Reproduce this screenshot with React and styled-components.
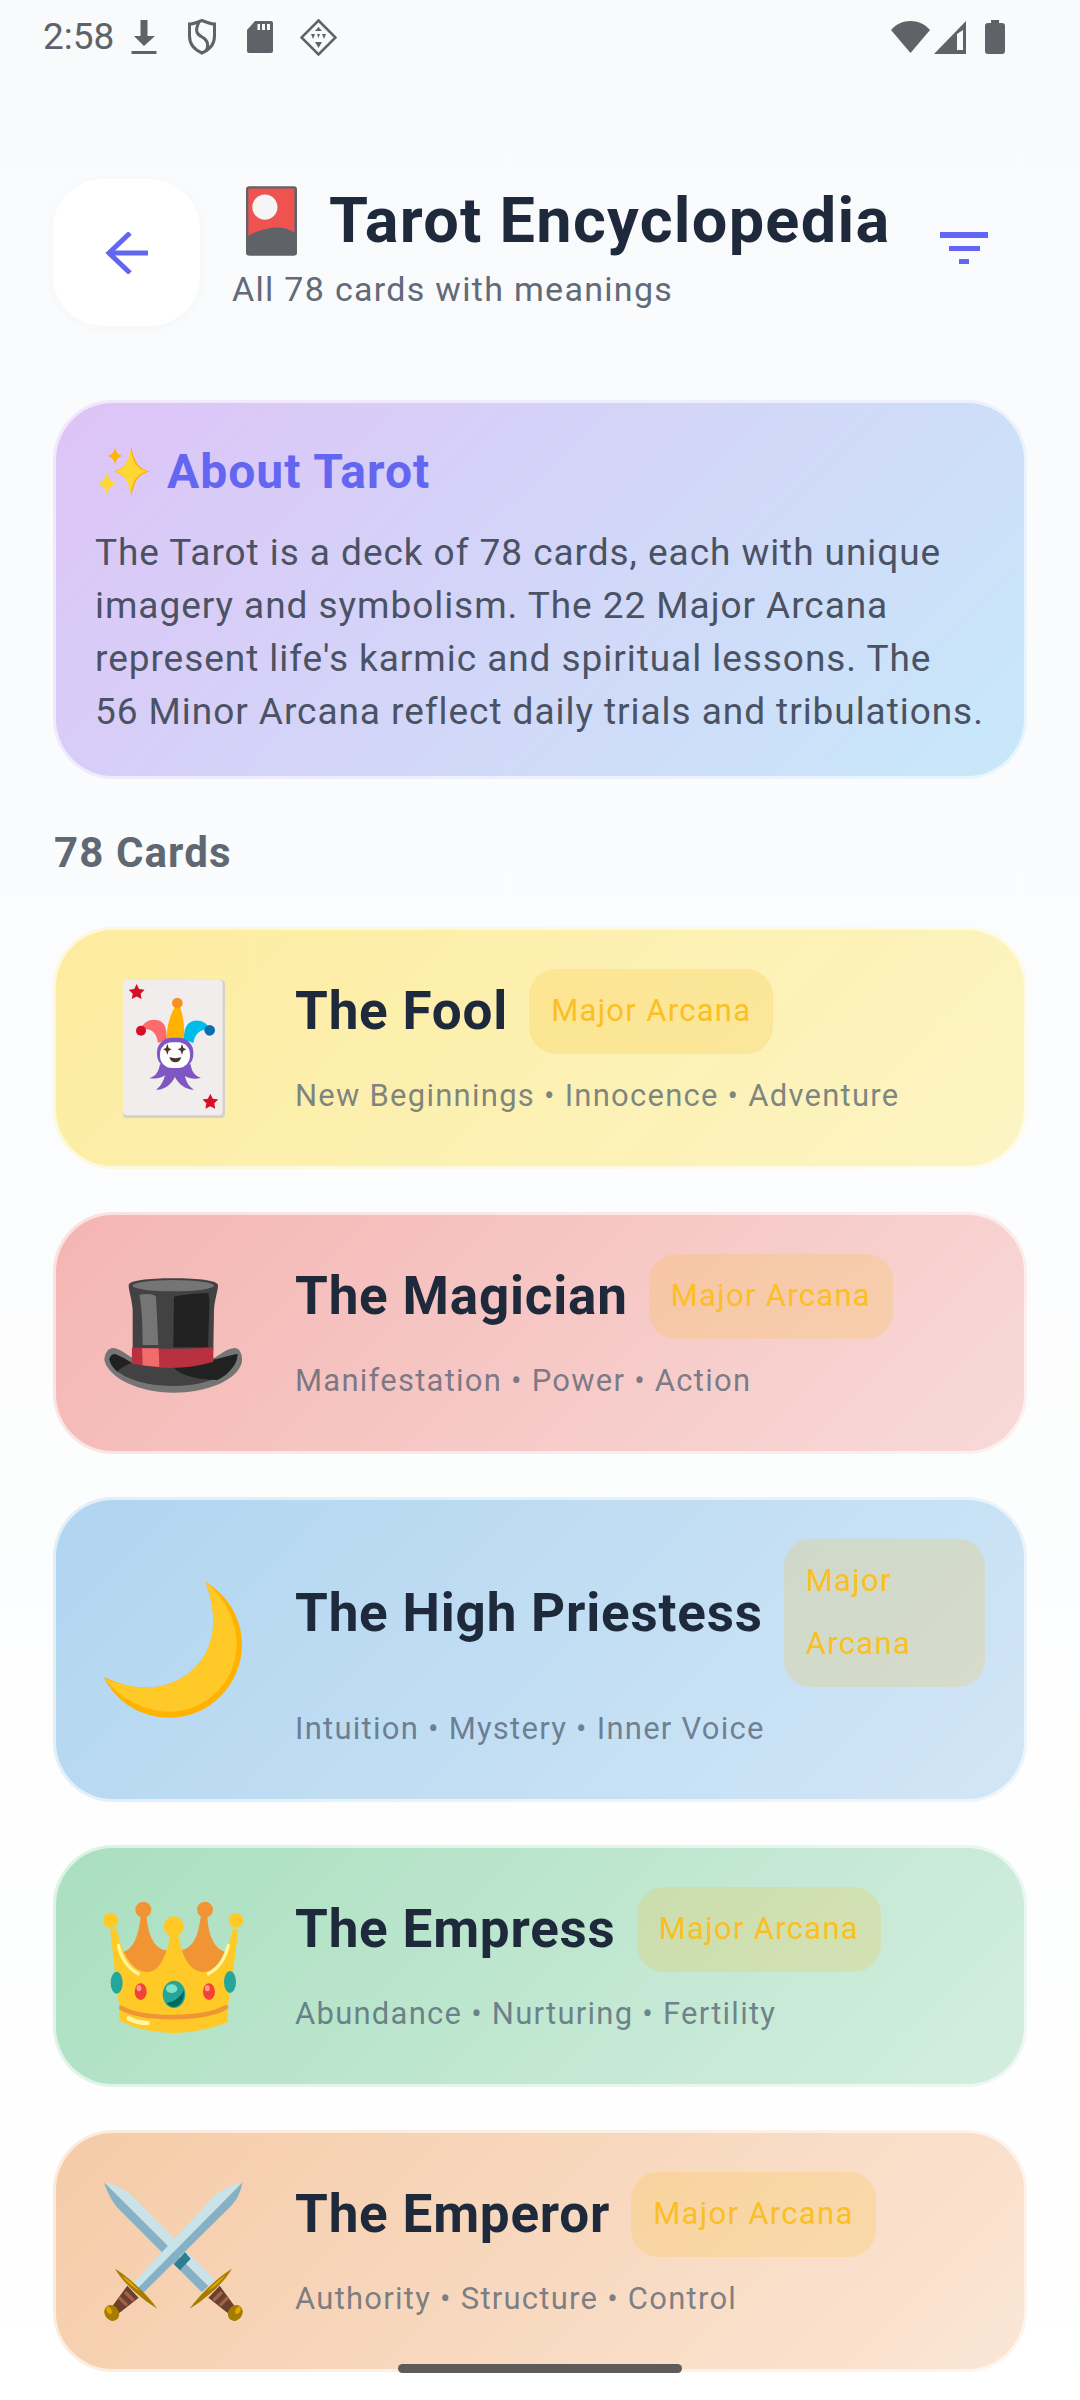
import React from 'react'
import styled, { createGlobalStyle } from 'styled-components'

const GlobalStyle = createGlobalStyle`
html,body{
    margin:0;
    padding:0;
}
body{
    font-family:Roboto,"Noto Sans",sans-serif;
}
*{
    box-sizing:border-box;
}
`

const Screen = styled.div`
position:relative;
width:1080px;
height:2400px;
overflow:hidden;
background:linear-gradient(180deg,#f8fafc 0%,#ffffff 100%);
`

const StatusBar = styled.div`
display:flex;
align-items:center;
height:74px;
padding:0 75px 0 43px;
color:#5f6368;
`

const StatusTime = styled.span`
width:72px;
font-size:37px;
line-height:74px;
`

const LeftIcon = styled.span`
display:flex;
align-items:center;
justify-content:center;
width:58px;
height:74px;
`

const RightIcons = styled.div`
display:flex;
align-items:center;
gap:4px;
margin-left:${p=>p.$left || 'auto'};
`

const Header = styled.header`
display:flex;
align-items:flex-start;
margin-top:105px;
padding:0 92px 0 53px;
`

const BackButton = styled.div`
display:flex;
align-items:center;
justify-content:center;
flex:none;
width:147px;
height:147px;
border-radius:50px;
background-color:#ffffff;
box-shadow:0 2px 8px rgba(100,116,139,0.03);
`

const TitleBlock = styled.div`
flex:1;
margin-left:32px;
padding-top:4px;
`

const PageTitle = styled.h1`
display:flex;
align-items:center;
margin:0;
padding-left:14px;
height:76px;
font-size:63px;
line-height:76px;
font-weight:700;
letter-spacing:1.3px;
color:#1e293b;
white-space:nowrap;
svg{
    margin-right:32px;
}
`

const PageSubtitle = styled.p`
margin:7px 0 0;
font-size:34px;
line-height:46px;
letter-spacing:1.3px;
color:#626a78;
`

const FilterButton = styled.div`
flex:none;
margin-top:53px;
line-height:0;
`

const AboutCard = styled.section`
margin:74px 53px 0;
height:379px;
padding:40px 39px 38px;
border:3px solid rgba(255,255,255,0.6);
border-radius:60px;
background:linear-gradient(135deg,#dec3f7 0%,#c7e9fa 100%) border-box;
`

const AboutTitle = styled.h2`
display:flex;
align-items:center;
margin:0;
height:58px;
font-size:48px;
line-height:58px;
font-weight:700;
letter-spacing:1px;
color:#6366f1;
svg{
    margin:0 16px 0 2px;
}
`

const AboutText = styled.p`
margin:25px 0 0;
font-size:37px;
line-height:53px;
letter-spacing:0.95px;
color:#4b5263;
white-space:nowrap;
`

const CountLabel = styled.h3`
margin:51px 54px 51px;
font-size:42px;
line-height:46px;
font-weight:700;
letter-spacing:1.1px;
color:#606874;
`

const CardList = styled.div`
display:flex;
flex-direction:column;
gap:43px;
margin:0 53px;
`

const Card = styled.article`
display:flex;
align-items:center;
gap:43px;
padding:39px;
border:3px solid rgba(255,255,255,0.6);
border-radius:60px;
background:linear-gradient(135deg,${p=>p.$from} 0%,${p=>p.$to} 100%) border-box;
`

const CardEmoji = styled.div`
display:flex;
align-items:center;
justify-content:center;
flex:none;
width:157px;
`

const CardBody = styled.div`
flex:1;
min-width:0;
`

const CardHead = styled.div`
display:flex;
align-items:center;
gap:21px;
`

const CardName = styled.h4`
flex:none;
margin:0;
font-size:53px;
line-height:63px;
font-weight:700;
letter-spacing:0.8px;
color:#1e293b;
white-space:nowrap;
`

const Badge = styled.span`
padding:10px 22px 12px;
border-radius:27px;
background-color:rgba(251,191,36,0.2);
font-size:31px;
line-height:63px;
letter-spacing:1.3px;
color:#fbbf24;
`

const CardKeywords = styled.p`
margin:11px 0 0;
font-size:31px;
line-height:62px;
letter-spacing:1.25px;
color:rgba(71,85,105,0.7);
`

const HomeIndicator = styled.div`
position:absolute;
left:398px;
top:2364px;
width:284px;
height:9px;
border-radius:5px;
background-color:#5f5b58;
`

// ---- status bar icons ----

const DownloadIcon = () => (
    <svg width="26" height="34" viewBox="0 0 26 34" fill="#5f6368">
        <path d="M9.5 0H16.5V16H24L13 26L3 16H9.5Z"/>
        <rect x="0.5" y="31" width="25" height="3"/>
    </svg>
)

const ShieldIcon = () => (
    <svg width="28" height="36" viewBox="0 0 28 36" fill="none" stroke="#5f6368" strokeWidth="3">
        <path d="M14 1.5C20 4 24 5 26.5 5V17C26.5 26 21 31 14 34C7 31 1.5 26 1.5 17V5C4 5 8 4 14 1.5Z"/>
        <path d="M11 3C7 11 8 15 14 18C20 21 21 26 18 32"/>
    </svg>
)

const SdIcon = () => (
    <svg width="26" height="32" viewBox="0 0 26 32">
        <path fill="#5f6368" d="M8 0H24A2 2 0 0 1 26 2V30A2 2 0 0 1 24 32H2A2 2 0 0 1 0 30V9Z"/>
        <path fill="#f9fafc" d="M10.5 3H13V9H10.5ZM15 3H18V9H15ZM20 3H23V9H20Z"/>
    </svg>
)

const DiamondIcon = () => (
    <svg width="37" height="37" viewBox="0 0 37 37">
        <path fill="none" stroke="#5f6368" strokeWidth="2.5" d="M18.5 1.5L35.5 18.5L18.5 35.5L1.5 18.5Z"/>
        <path fill="#5f6368" d="M18.5 8L22 12H15ZM11 15H15L13 20ZM26 15H22L24 20ZM15 23H22L18.5 29ZM17 15L20 15L18.5 19Z"/>
    </svg>
)

const WifiIcon = () => (
    <svg width="39" height="32" viewBox="0 0 39 32" fill="#5f6368">
        <path d="M0 9C10 -3 29 -3 39 9L19.5 32Z"/>
    </svg>
)

const SignalIcon = () => (
    <svg width="32" height="33" viewBox="0 0 32 33">
        <path fill="#5f6368" d="M32 0V33H0Z"/>
        <path fill="#f9fafc" d="M23 13L29 9V29H23Z"/>
    </svg>
)

const BatteryIcon = () => (
    <svg width="20" height="34" viewBox="0 0 20 34" fill="#5f6368">
        <path d="M6 0H14V3H17A3 3 0 0 1 20 6V31A3 3 0 0 1 17 34H3A3 3 0 0 1 0 31V6A3 3 0 0 1 3 3H6Z"/>
    </svg>
)

// ---- header icons ----

const BackArrow = () => (
    <svg width="44" height="42" viewBox="0 0 44 42" fill="none" stroke="#6366f1" strokeWidth="5">
        <path d="M43 21H5"/>
        <path d="M25 1L4 21L25 41"/>
    </svg>
)

const FilterIcon = () => (
    <svg width="48" height="32" viewBox="0 0 48 32" fill="#6366f1">
        <rect x="0" y="0" width="48" height="6"/>
        <rect x="9" y="14" width="31" height="5"/>
        <rect x="19" y="27" width="10" height="5"/>
    </svg>
)

const CardsEmoji = () => (
    <svg width="51" height="70" viewBox="78 50 154 210">
        <rect x="78" y="50" width="154" height="210" rx="10" fill="#5f6368"/>
        <path fill="#ef5350" d="M85 57H224V190C205 178 185 173 165 175C135 178 105 187 85 200Z"/>
        <circle cx="135" cy="113" r="38" fill="#f5f5f5"/>
    </svg>
)

// four pointed star with hollow sides
const sparkle = (cx,cy,rx,ry) => (
    `M${cx} ${cy-ry}Q${cx+rx*0.14} ${cy-ry*0.14} ${cx+rx} ${cy}Q${cx+rx*0.14} ${cy+ry*0.14} ${cx} ${cy+ry}Q${cx-rx*0.14} ${cy+ry*0.14} ${cx-rx} ${cy}Q${cx-rx*0.14} ${cy-ry*0.14} ${cx} ${cy-ry}Z`
)

const SparklesEmoji = () => (
    <svg width="54" height="54" viewBox="98 446 54 54">
        <path fill="#ffb300" d={sparkle(132.5,472.5,18,25)}/>
        <path fill="#fdd835" d={sparkle(131.5,472.5,16,23)}/>
        <path fill="#ffb300" d={sparkle(116,457,7.5,8.5)}/>
        <path fill="#fdd835" d={sparkle(108,484.5,10,12)}/>
    </svg>
)

// ---- card emojis, drawn on crops of 3 units per pixel ----

const starPoints = (cx,cy,r) => {
    const pts = []
    for(let i=0;i<10;i++){
        const a = -Math.PI/2 + i*Math.PI/5
        const d = i%2 ? r*0.5 : r
        pts.push(`${(cx+Math.cos(a)*d).toFixed(1)},${(cy+Math.sin(a)*d).toFixed(1)}`)
    }
    return pts.join(' ')
}

const JokerEmoji = () => (
    <svg width="139" height="139" viewBox="72 56 417 417">
        <rect x="129" y="58" width="306" height="417" rx="14" fill="#d6cfcd"/>
        <rect x="129" y="58" width="299" height="407" rx="12" fill="#f0edec"/>
        <polygon points={starPoints(170,96,25)} fill="#d50f25"/>
        <polygon points={starPoints(391,425,25)} fill="#d50f25"/>
        <path fill="#ffb300" d="M258 238C262 190 272 160 285 140H300C310 165 313 200 314 238Z"/>
        <circle cx="292" cy="128" r="16" fill="#f5911e"/>
        <path fill="#ff6b6b" d="M234 248C230 218 215 206 195 206L183 205C190 180 225 170 245 185C255 192 260 205 260 238Z"/>
        <circle cx="183" cy="211" r="15" fill="#d50f25"/>
        <path fill="#00bcea" d="M340 248C345 218 360 208 388 205C380 182 345 172 325 190C315 200 312 215 312 238Z"/>
        <circle cx="389" cy="210" r="16" fill="#0a6fae"/>
        <path fill="#7e57c2" d="M240 312C235 338 225 350 207 353C230 358 245 352 255 345C250 365 240 380 228 388C255 390 275 370 285 350C295 370 315 388 342 388C325 378 318 362 315 347C330 355 345 358 363 352C345 348 335 335 332 312Z"/>
        <rect x="231" y="232" width="109" height="94" rx="44" fill="#7e57c2"/>
        <rect x="240" y="246" width="90" height="77" rx="36" fill="#ffffff"/>
        <path fill="#4e342e" d="M262 250L266 263L275 267L266 271L262 284L258 271L249 267L258 263ZM306 250L310 263L319 267L310 271L306 284L302 271L293 267L302 263ZM268 291Q286 296 304 291Q300 306 286 306Q272 306 268 291Z"/>
    </svg>
)

const HatEmoji = () => (
    <svg width="139" height="139" viewBox="72 12 417 417">
        <path fill="#757575" d="M73 300C75 272 90 262 102 264C125 268 140 285 160 295H400C420 285 440 265 465 264C480 265 488 285 486 305C475 360 380 398 280 398C180 398 85 355 73 300Z"/>
        <path fill="#424242" d="M88 298C92 284 100 280 110 284C125 290 145 305 160 310H400C420 300 445 285 472 282C475 320 420 376 280 378C170 378 95 340 88 298Z"/>
        <path fill="#212121" d="M88 298C92 284 100 280 110 284C125 290 140 298 155 308C135 315 120 325 112 335C98 322 90 310 88 298Z"/>
        <path fill="#212121" d="M280 322C330 318 390 300 472 282C475 310 445 345 412 360C350 360 300 345 280 322Z"/>
        <path fill="#424242" d="M146 75C148 62 200 55 280 55C360 55 412 62 414 75C414 95 405 110 402 150L400 270H158V150C155 110 146 95 146 75Z"/>
        <ellipse cx="280" cy="77" rx="122" ry="17" fill="#757575"/>
        <path fill="#757575" d="M178 105C195 100 222 102 228 110L235 255H188C188 190 185 140 178 105Z"/>
        <path fill="#212121" d="M282 110C310 103 370 98 385 100C392 130 385 180 385 262H280Z"/>
        <path fill="#b93040" d="M156 262C240 268 320 268 400 262V305C320 330 230 328 155 310Z"/>
        <path fill="#f26b6b" d="M186 265H236L238 321L188 316Z"/>
    </svg>
)

const MoonEmoji = () => (
    <svg width="139" height="139" viewBox="72 47 417 417">
        <path fill="#ffb300" d="M376 52C440 90 486 160 486 240C486 360 390 460 270 460C180 460 105 410 72 338C120 360 160 370 195 370C310 370 400 290 400 170C400 130 390 90 376 52Z"/>
        <path fill="#ffca28" d="M378 54C430 95 470 165 470 240C470 350 380 442 270 442C190 442 115 400 78 345C120 360 160 370 195 370C310 370 400 290 400 170C400 130 390 90 378 54Z"/>
    </svg>
)

const CrownEmoji = () => (
    <svg width="139" height="139" viewBox="72 50 417 417">
        <path fill="#f19534" d="M130 215C160 205 175 170 182 110H200C205 170 225 205 258 210H300C340 205 355 165 362 110H382C385 170 405 205 435 215L400 290H170Z"/>
        <circle cx="190" cy="88" r="24" fill="#f19534"/>
        <circle cx="375" cy="88" r="24" fill="#f19534"/>
        <path fill="#ffca28" d="M90 145H110C125 215 150 270 200 275C240 278 262 220 270 165H295C305 220 325 275 370 275C420 270 445 210 458 145H475C465 240 450 330 443 385V425C390 450 310 458 280 458C240 458 170 450 118 420V380C110 320 100 230 90 145Z"/>
        <circle cx="92" cy="120" r="23" fill="#ffca28"/>
        <circle cx="468" cy="120" r="22" fill="#ffca28"/>
        <circle cx="281" cy="138" r="30" fill="#ffca28"/>
        <path fill="none" stroke="#f19534" strokeWidth="14" strokeLinecap="round" d="M124 383C190 420 370 420 438 381"/>
        <path fill="none" stroke="#fff59d" strokeWidth="10" strokeLinecap="round" d="M115 195C125 235 145 265 175 280M445 195C435 235 415 265 385 280"/>
        <path fill="none" stroke="#fff59d" strokeWidth="14" strokeLinecap="round" d="M146 414C165 425 185 428 202 428"/>
        <ellipse cx="110" cy="307" rx="18" ry="33" fill="#26a69a"/>
        <ellipse cx="450" cy="305" rx="18" ry="33" fill="#26a69a"/>
        <ellipse cx="282" cy="342" rx="34" ry="41" fill="#26a69a"/>
        <path fill="#00695c" d="M260 368C285 365 300 350 312 330C315 360 300 378 282 380C272 380 265 375 260 368Z"/>
        <ellipse cx="275" cy="325" rx="17" ry="13" fill="#80e0c8"/>
        <ellipse cx="182" cy="334" rx="18" ry="25" fill="#f44336"/>
        <ellipse cx="387" cy="334" rx="18" ry="25" fill="#f44336"/>
        <ellipse cx="177" cy="324" rx="7" ry="9" fill="#ff9e9e"/>
        <ellipse cx="382" cy="324" rx="7" ry="9" fill="#ff9e9e"/>
    </svg>
)

const SwordHilt = () => (
    <>
        <path fill="#6d3f2e" d="M142 376L176 412L118 458L98 436Z"/>
        <path stroke="#a0644a" strokeWidth="10" strokeLinecap="round" d="M138 398L158 418M120 414L138 432"/>
        <ellipse cx="95" cy="458" rx="21" ry="25" transform="rotate(-35 95 458)" fill="#a67c00"/>
        <ellipse cx="87" cy="450" rx="7" ry="12" transform="rotate(-25 87 450)" fill="#e0a800"/>
        <path fill="#a67c00" d="M105 325C140 345 200 400 232 445C190 420 130 370 105 325Z"/>
        <path fill="#e0a800" d="M125 345C145 358 165 375 178 392C155 378 135 362 125 345Z"/>
    </>
)

const SwordsEmoji = () => (
    <svg width="139" height="139" viewBox="72 65 417 417">
        <path fill="#c8e3e9" d="M72 66C110 75 140 90 160 110L405 360L385 378Z"/>
        <path fill="#85b1c6" d="M72 66C85 105 100 130 120 150L365 395L385 378Z"/>
        <path fill="#2e7d92" d="M315 275L332 295L300 330L282 312Z"/>
        <g transform="matrix(-1 0 0 1 561 0)"><SwordHilt/></g>
        <path fill="#c8e3e9" d="M488 66C450 75 420 90 400 110L160 368L172 385Z"/>
        <path fill="#85b1c6" d="M488 66C480 100 470 120 450 140L190 397L172 385Z"/>
        <SwordHilt/>
    </svg>
)

const cards = [
    {name:'The Fool',keywords:'New Beginnings • Innocence • Adventure',from:'#fdec9f',to:'#fcf5c4',Emoji:JokerEmoji},
    {name:'The Magician',keywords:'Manifestation • Power • Action',from:'#f4b5b2',to:'#f8dad8',Emoji:HatEmoji},
    {name:'The High Priestess',keywords:'Intuition • Mystery • Inner Voice',from:'#b0d5f0',to:'#d2e6f6',Emoji:MoonEmoji},
    {name:'The Empress',keywords:'Abundance • Nurturing • Fertility',from:'#a9dfbf',to:'#d4eee0',Emoji:CrownEmoji},
    {name:'The Emperor',keywords:'Authority • Structure • Control',from:'#f5cba7',to:'#fbe6d6',Emoji:SwordsEmoji},
]

export default function App() {
  return (
    <>
        <GlobalStyle />
        <Screen>
            <StatusBar>
                <StatusTime>2:58</StatusTime>
                <LeftIcon><DownloadIcon /></LeftIcon>
                <LeftIcon><ShieldIcon /></LeftIcon>
                <LeftIcon><SdIcon /></LeftIcon>
                <LeftIcon><DiamondIcon /></LeftIcon>
                <RightIcons>
                    <WifiIcon />
                    <SignalIcon />
                </RightIcons>
                <RightIcons $left="19px">
                    <BatteryIcon />
                </RightIcons>
            </StatusBar>
            <Header>
                <BackButton><BackArrow /></BackButton>
                <TitleBlock>
                    <PageTitle><CardsEmoji />Tarot Encyclopedia</PageTitle>
                    <PageSubtitle>All 78 cards with meanings</PageSubtitle>
                </TitleBlock>
                <FilterButton><FilterIcon /></FilterButton>
            </Header>
            <AboutCard>
                <AboutTitle><SparklesEmoji />About Tarot</AboutTitle>
                <AboutText>
                    The Tarot is a deck of 78 cards, each with unique<br />
                    imagery and symbolism. The 22 Major Arcana<br />
                    represent life's karmic and spiritual lessons. The<br />
                    56 Minor Arcana reflect daily trials and tribulations.
                </AboutText>
            </AboutCard>
            <CountLabel>78 Cards</CountLabel>
            <CardList>
                {
                    cards.map((card, index)=>{
                        return (
                            <Card key={index} $from={card.from} $to={card.to}>
                                <CardEmoji><card.Emoji /></CardEmoji>
                                <CardBody>
                                    <CardHead>
                                        <CardName>{card.name}</CardName>
                                        <Badge>Major Arcana</Badge>
                                    </CardHead>
                                    <CardKeywords>{card.keywords}</CardKeywords>
                                </CardBody>
                            </Card>
                        )
                    })
                }
            </CardList>
            <HomeIndicator />
        </Screen>
    </>
  )
}
